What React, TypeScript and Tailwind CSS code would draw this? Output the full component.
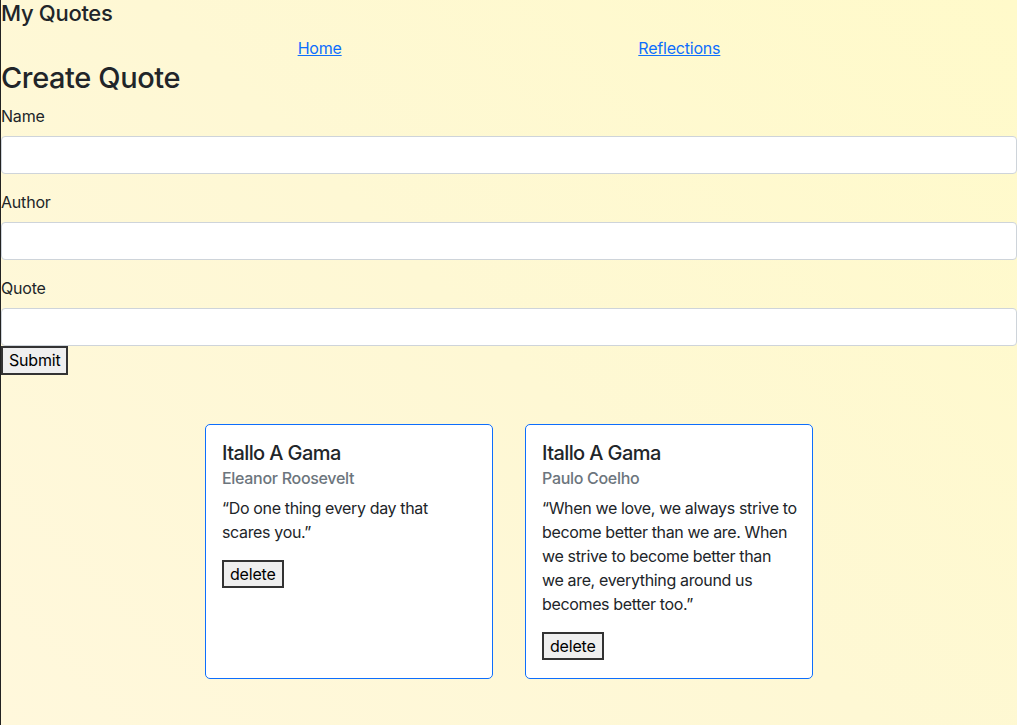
import React from "react";

const quotes = [
  {
    name: "Itallo A Gama",
    author: "Eleanor Roosevelt",
    lines: ["“Do one thing every day that", "scares you.”"],
  },
  {
    name: "Itallo A Gama",
    author: "Paulo Coelho",
    lines: [
      "“When we love, we always strive to",
      "become better than we are. When",
      "we strive to become better than",
      "we are, everything around us",
      "becomes better too.”",
    ],
  },
];

function Field({ label, last }: { label: string; last?: boolean }) {
  return (
    <div className={last ? "" : "mb-4"}>
      <label className="block mb-2 leading-6">{label}</label>
      <input
        type="text"
        className="block w-full h-[38px] bg-white border border-[#ced4da] rounded-[4px] px-3 outline-none"
      />
    </div>
  );
}

export default function App() {
  return (
    <div
      className="min-h-screen border-l border-[#222] text-[#212529] text-base leading-6 tracking-[-0.2px] bg-[linear-gradient(45deg,#fff8dc,#fef8d4_50%,#fffaca)]"
      style={{ fontFamily: "Inter, 'Noto Sans', sans-serif" }}
    >
      <h5 className="text-[22px] leading-[26px] font-medium tracking-[-0.3px] mb-[10px]">My Quotes</h5>
      <nav className="flex justify-evenly leading-6">
        <a href="#" className="text-[#0d6efd] underline">Home</a>
        <a href="#" className="text-[#0d6efd] underline">Reflections</a>
      </nav>
      <h2 className="text-[29px] leading-[35px] font-medium tracking-[-0.4px] mb-[9px]">Create Quote</h2>
      <form onSubmit={(e) => e.preventDefault()}>
        <Field label="Name" />
        <Field label="Author" />
        <Field label="Quote" last />
        <button
          type="submit"
          className="block h-[29px] bg-[#efefef] border-2 border-[#333] px-[6px] text-base leading-[25px] text-black"
        >
          Submit
        </button>
      </form>
      <div className="flex justify-center gap-8 mt-[49px]">
        {quotes.map((q, i) => (
          <div
            key={i}
            className="w-[288px] min-h-[255px] bg-white border border-[#0d6efd] rounded-[5px] p-4"
          >
            <h5 className="text-[20px] leading-[24px] font-medium tracking-[-0.6px] mb-2">{q.name}</h5>
            <h6 className="text-base leading-[19px] font-medium tracking-[-0.3px] text-[#6c757d] -mt-1 mb-2">{q.author}</h6>
            <p className="mb-4 leading-6 tracking-[-0.35px]">
              {q.lines.map((l, j) => (
                <span key={j} className="block whitespace-nowrap">{l}</span>
              ))}
            </p>
            <button className="block h-[28px] bg-[#efefef] border-2 border-[#333] px-[6px] text-base leading-[24px] text-black">
              delete
            </button>
          </div>
        ))}
      </div>
    </div>
  );
}
